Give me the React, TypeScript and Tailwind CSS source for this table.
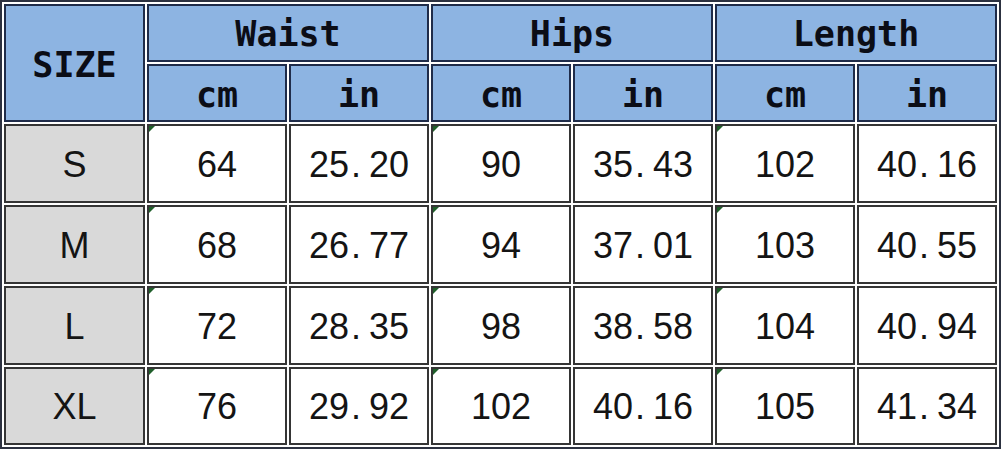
import React from "react";

const headFont = { fontFamily: '"DejaVu Sans Mono", "Liberation Mono", monospace' };
const bodyFont = { fontFamily: '"Liberation Sans", Arial, sans-serif' };

type Row = { size: string; vals: string[] };

const rows: Row[] = [
  { size: "S", vals: ["64", "25.20", "90", "35.43", "102", "40.16"] },
  { size: "M", vals: ["68", "26.77", "94", "37.01", "103", "40.55"] },
  { size: "L", vals: ["72", "28.35", "98", "38.58", "104", "40.94"] },
  { size: "XL", vals: ["76", "29.92", "102", "40.16", "105", "41.34"] },
];

function Num({ v }: { v: string }) {
  if (!v.includes(".")) return <span>{v}</span>;
  const [a, b] = v.split(".");
  return (
    <span className="whitespace-nowrap">
      <span>{a}</span>
      <span className="inline-block w-[20px] pl-[2px] text-left">.</span>
      <span>{b}</span>
    </span>
  );
}

const headCell =
  "flex items-center justify-center border-2 border-[#1f2c4a] bg-[#8db4e2] text-[35px] font-bold text-[#0b0d16] leading-none";
const dataCell =
  "relative flex items-center justify-center border-2 border-[#353535] bg-white text-[36px] text-[#141414] leading-none";

export default function App() {
  return (
    <div className="w-[1001px] h-[449px] bg-white">
      <div
        className="grid h-[449px] w-[1001px] grid-cols-[141px_repeat(6,140px)] grid-rows-[58px_58px_79px_79px_79px_78px] gap-[2px] border-2 border-[#2c3140] bg-white p-[2px]"
      >
        <div className={`${headCell} row-span-2`} style={headFont}>
          <span className="pt-[4px]">SIZE</span>
        </div>
        <div className={`${headCell} col-span-2`} style={headFont}>
          <span className="pt-[2px]">Waist</span>
        </div>
        <div className={`${headCell} col-span-2`} style={headFont}>
          <span className="pt-[2px]">Hips</span>
        </div>
        <div className={`${headCell} col-span-2`} style={headFont}>
          <span className="pt-[2px]">Length</span>
        </div>
        {["cm", "in", "cm", "in", "cm", "in"].map((u, i) => (
          <div key={i} className={headCell} style={headFont}>
            <span className="pt-[4px]">{u}</span>
          </div>
        ))}
        {rows.map((r) => (
          <React.Fragment key={r.size}>
            <div
              className="flex items-center justify-center border-2 border-[#353535] bg-[#d9d9d9] text-[36px] text-[#141414] leading-none"
              style={bodyFont}
            >
              <span className="pt-[2px]">{r.size}</span>
            </div>
            {r.vals.map((v, i) => (
              <div key={i} className={dataCell} style={bodyFont}>
                {i % 2 === 0 && (
                  <span className="absolute left-0 top-0 h-0 w-0 border-r-[6px] border-t-[6px] border-r-transparent border-t-[#1f5f2a]" />
                )}
                <span className="pt-[2px]">
                  <Num v={v} />
                </span>
              </div>
            ))}
          </React.Fragment>
        ))}
      </div>
    </div>
  );
}
